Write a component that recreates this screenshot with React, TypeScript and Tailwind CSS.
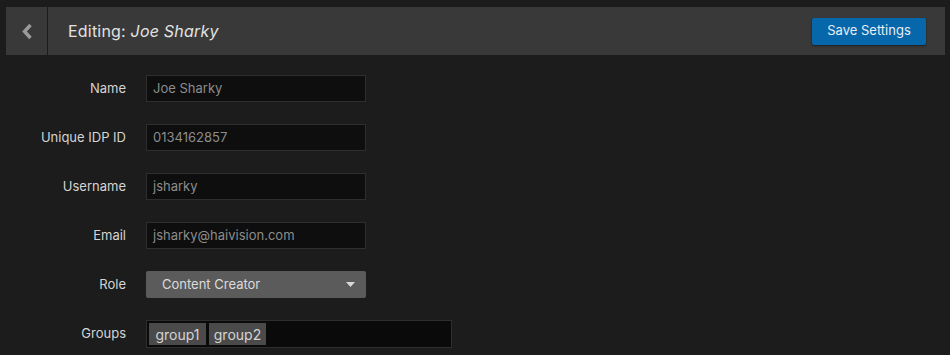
import React from 'react';

const fields = [
  { label: 'Name', value: 'Joe Sharky' },
  { label: 'Unique IDP ID', value: '0134162857' },
  { label: 'Username', value: 'jsharky' },
  { label: 'Email', value: 'jsharky@haivision.com' },
];

const App: React.FC = () => {
  return (
    <div className="min-h-[355px] bg-[#1c1c1c] pt-[7px] px-[6px] text-[13px]" style={{ fontFamily: 'Inter, "Open Sans", sans-serif' }}>
      {/* Header */}
      <div className="flex h-[48px] w-[939px] bg-[#393939]">
        <button className="flex w-[42px] items-center justify-center border-r border-[#1c1c1c] text-[#9a9a9a]">
          <svg width="12" height="17" viewBox="0 0 12 17">
            <path d="M9.5 2 L3.5 8.5 L9.5 15" fill="none" stroke="currentColor" strokeWidth="3.4" />
          </svg>
        </button>
        <div className="flex flex-1 items-center justify-between pl-[20px] pr-[19px]">
          <h1 className="text-[16px] tracking-[0.2px] text-[#e2e2e2]">
            Editing: <span className="italic">Joe Sharky</span>
          </h1>
          <button className="h-[27px] w-[114px] rounded-[2px] bg-[#0667aa] text-[13px] text-[#e6eef5] shadow-[0_1px_2px_rgba(0,0,0,0.5)]">
            Save Settings
          </button>
        </div>
      </div>

      {/* Form */}
      <div className="mt-[20px] flex flex-col gap-[22px]">
        {fields.map((f) => (
          <div key={f.label} className="flex items-center">
            <label className="w-[120px] text-right text-[#d4d4d4]">{f.label}</label>
            <div className="ml-[20px] flex h-[27px] w-[220px] items-center border border-[#2e2e2e] bg-[#0e0e0e] px-[6px] text-[#8c8c8c]">
              {f.value}
            </div>
          </div>
        ))}
        <div className="flex items-center">
          <label className="w-[120px] text-right text-[#d4d4d4]">Role</label>
          <div className="ml-[20px] flex h-[27px] w-[220px] items-center justify-between rounded-[2px] bg-[#5b5b5b] pl-[16px] pr-[11px] text-[#dcdcdc]">
            <span>Content Creator</span>
            <svg width="9" height="5" viewBox="0 0 9 5">
              <path d="M0 0 L9 0 L4.5 5 Z" fill="#d8d8d8" />
            </svg>
          </div>
        </div>
        <div className="flex items-center">
          <label className="w-[120px] text-right text-[#d4d4d4]">Groups</label>
          <div className="ml-[20px] flex h-[28px] w-[306px] items-center gap-[3px] border border-[#2e2e2e] bg-[#0a0a0a] px-[2px]">
            {['group1', 'group2'].map((g) => (
              <span key={g} className="flex h-[22px] w-[57px] items-center justify-center bg-[#4a4a4a] text-[14px] text-[#d4d4d4]">
                {g}
              </span>
            ))}
          </div>
        </div>
      </div>
    </div>
  );
};

export default App;
